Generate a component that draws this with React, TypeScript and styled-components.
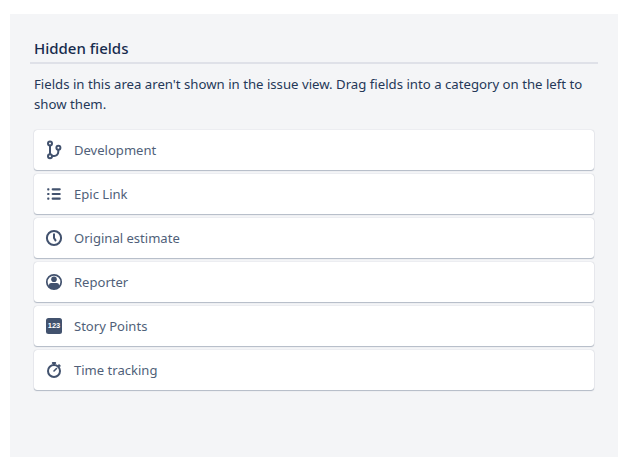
import React from "react";
import styled, { createGlobalStyle } from "styled-components";

const GlobalStyle = createGlobalStyle`
  * { box-sizing: border-box; }
  body {
    margin: 0;
    background: #fff;
    font-family: "Noto Sans", "Open Sans", sans-serif;
  }
`;

const Page = styled.main`
  width: 640px;
  height: 457px;
  padding: 14px 22px 0 10px;
  overflow: hidden;
`;

const Panel = styled.section`
  height: 100%;
  padding: 24px 20px 0;
  background: #f4f5f7;
`;

const Heading = styled.h2`
  margin: 0;
  height: 26px;
  padding: 0 4px;
  border-bottom: 2px solid #dfe1e8;
  color: #172b4d;
  font-size: 15px;
  font-weight: 500;
  line-height: 21px;
`;

const Description = styled.p`
  margin: 10px 0 0;
  padding: 0 4px;
  color: #253858;
  font-size: 13.2px;
  line-height: 20px;
  white-space: nowrap;
`;

const FieldList = styled.ul`
  display: flex;
  flex-direction: column;
  gap: 4px;
  margin: 16px 4px 0;
  padding: 0;
  list-style: none;
`;

const FieldCard = styled.li`
  display: flex;
  align-items: center;
  gap: 8px;
  height: 40px;
  padding-left: 8px;
  border-radius: 3px;
  background: #fff;
  box-shadow: 0 1px 1px rgba(9, 30, 66, 0.25), 0 0 1px rgba(9, 30, 66, 0.31);
`;

const FieldName = styled.span`
  color: #505f79;
  font-size: 13.05px;
  line-height: 20px;
`;

const Icon = styled.svg.attrs({ viewBox: "0 0 24 24", strokeWidth: 2, "aria-hidden": true })`
  width: 24px;
  height: 24px;
  flex: none;
  fill: none;
  stroke: #42526e;
  stroke-linecap: round;
  stroke-linejoin: round;

  .solid {
    fill: #42526e;
    stroke: none;
  }
`;

const NumberBadge = styled.span`
  display: flex;
  align-items: center;
  justify-content: center;
  width: 16px;
  height: 16px;
  margin: 0 4px;
  border-radius: 2.5px;
  background: #42526e;
  color: #fff;
  font: 700 7.5px/16px "Liberation Sans", sans-serif;
`;

const BranchIcon = () => (
  <Icon>
    <circle cx="8" cy="5.6" r="2" />
    <circle cx="8" cy="18.2" r="2" />
    <circle cx="16.4" cy="9.8" r="2" />
    <path d="M8 7.8v8.4M16.3 12v1.8a4.1 4.1 0 0 1-4.1 4.1H10.4" />
  </Icon>
);

const ListIcon = () => (
  <Icon>
    <path d="M10.7 7.3h7M10.7 12h7M10.7 16.7h7" strokeWidth="2.2" />
    <g className="solid">
      <rect x="5.2" y="6.2" width="2.2" height="2.2" rx="0.7" />
      <rect x="5.2" y="10.9" width="2.2" height="2.2" rx="0.7" />
      <rect x="5.2" y="15.6" width="2.2" height="2.2" rx="0.7" />
    </g>
  </Icon>
);

const ClockIcon = () => (
  <Icon>
    <circle cx="12" cy="12" r="7.1" />
    <path d="M12 8.2V12l1.5 2.4" />
  </Icon>
);

const PersonIcon = () => (
  <Icon>
    <circle cx="12" cy="12" r="7.2" strokeWidth="1.7" />
    <circle className="solid" cx="12" cy="9.3" r="2.8" />
    <path className="solid" d="M7 17.3v-2.2c0-1.2.9-2.1 2.1-2.1h5.8c1.2 0 2.1.9 2.1 2.1v2.2A7.4 7.4 0 0 1 7 17.3Z" />
  </Icon>
);

const StopwatchIcon = () => (
  <Icon>
    <circle cx="12" cy="13" r="6" />
    <path d="M12 13l2.5-2.5" strokeWidth="1.6" />
    <path d="M10.8 4.9h2.4M12 5v2M17 7.2l.7.7" />
  </Icon>
);

const fields = [
  { name: "Development", icon: <BranchIcon /> },
  { name: "Epic Link", icon: <ListIcon /> },
  { name: "Original estimate", icon: <ClockIcon /> },
  { name: "Reporter", icon: <PersonIcon /> },
  { name: "Story Points", icon: <NumberBadge>123</NumberBadge> },
  { name: "Time tracking", icon: <StopwatchIcon /> },
];

export default function App() {
  return (
    <Page>
      <GlobalStyle />
      <Panel>
        <Heading>Hidden fields</Heading>
        <Description>
          Fields in this area aren't shown in the issue view. Drag fields into a category on the left to
          <br />
          show them.
        </Description>
        <FieldList>
          {fields.map(({ name, icon }) => (
            <FieldCard key={name}>
              {icon}
              <FieldName>{name}</FieldName>
            </FieldCard>
          ))}
        </FieldList>
      </Panel>
    </Page>
  );
}
